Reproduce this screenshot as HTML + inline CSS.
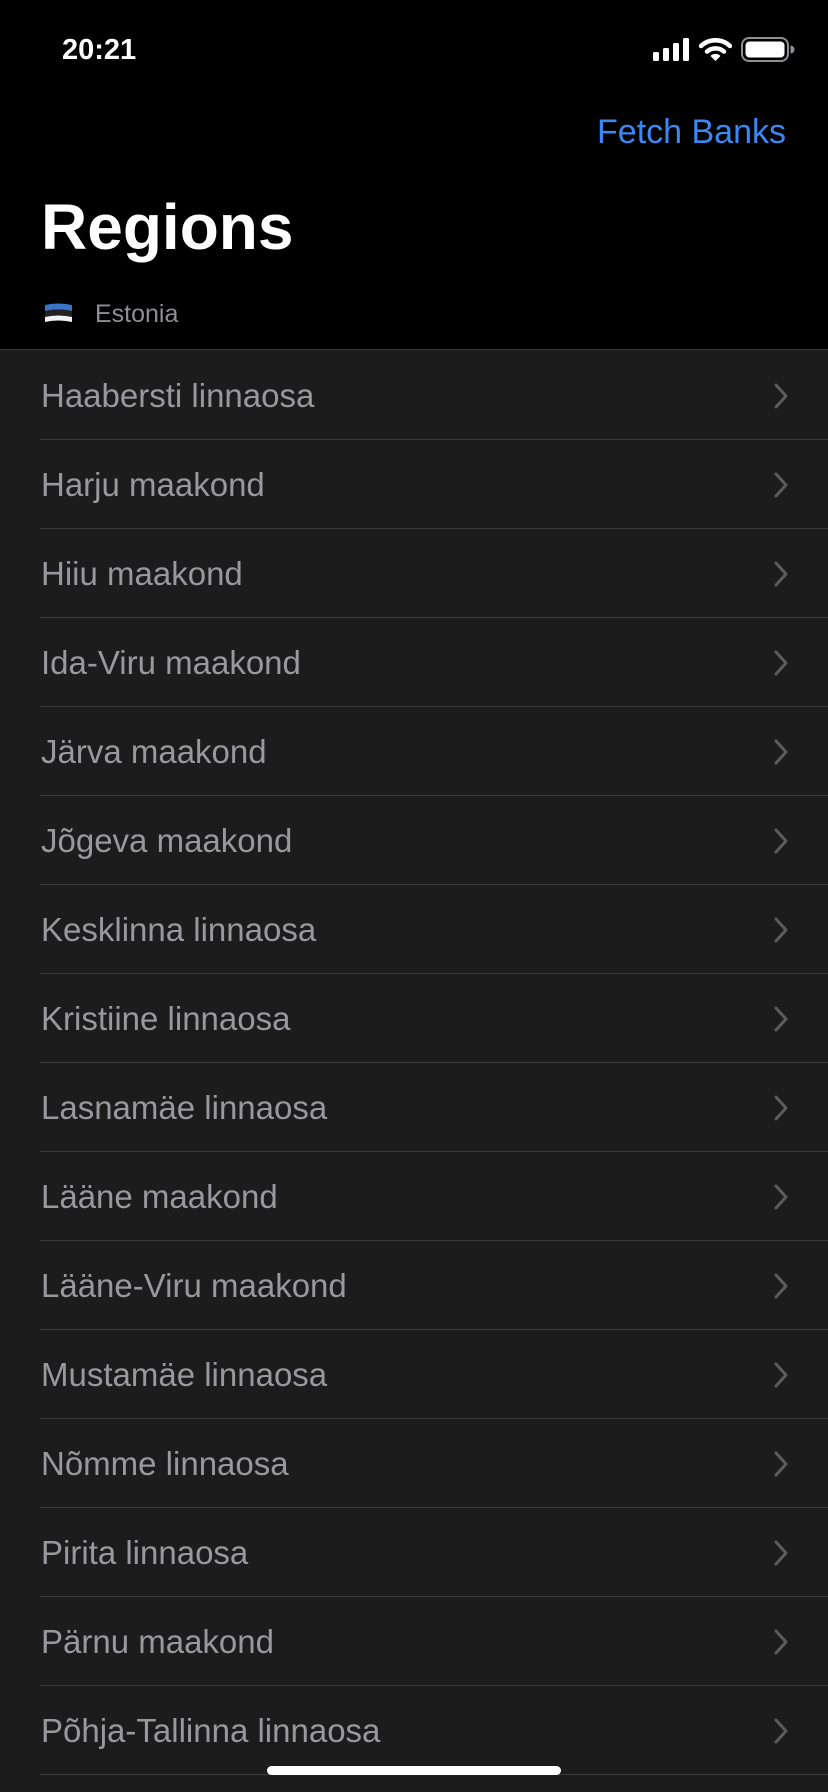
<!DOCTYPE html>
<html><head><meta charset="utf-8"><style>
*{margin:0;padding:0;box-sizing:border-box}
body{width:828px;height:1792px;background:#1c1c1c;font-family:"Liberation Sans",sans-serif;position:relative;overflow:hidden}
.hdr{position:absolute;left:0;top:0;width:828px;height:350px;background:#000;border-bottom:1px solid #3a3a3c}
.abs{position:absolute;white-space:nowrap}
.row{position:absolute;left:0;width:828px;height:89px}
.row .t{position:absolute;left:41px;top:25px;font-size:33px;line-height:40px;color:#98989d}
.row .sep{position:absolute;left:40px;right:0;bottom:0;height:1px;background:#3a3a3c}
.row svg{position:absolute;left:772px;top:31px}
</style></head><body>
<div class="hdr">
 <div class="abs" style="left:62px;top:33px;font-size:29px;line-height:34px;color:#fff;font-weight:bold;">20:21</div>
 <svg class="abs" style="left:653px;top:38px" width="38" height="23" viewBox="0 0 38 23">
  <rect x="0" y="14" width="6" height="9" rx="1.5" fill="#fff"/>
  <rect x="10" y="10" width="6" height="13" rx="1.5" fill="#fff"/>
  <rect x="20" y="5" width="6" height="18" rx="1.5" fill="#fff"/>
  <rect x="30" y="0" width="6" height="23" rx="1.5" fill="#fff"/>
 </svg>
 <svg class="abs" style="left:699px;top:38px" width="33" height="23" viewBox="0 0 33 23">
  <path d="M2 8 A21 21 0 0 1 31 8" stroke="#fff" stroke-width="4.5" fill="none" stroke-linecap="round"/>
  <path d="M8 13.5 A13 13 0 0 1 25 13.5" stroke="#fff" stroke-width="4.5" fill="none" stroke-linecap="round"/>
  <path d="M11.5 18 L16.5 23 L21.5 18 A7 7 0 0 0 11.5 18Z" fill="#fff"/>
 </svg>
 <svg class="abs" style="left:741px;top:37px" width="54" height="25" viewBox="0 0 54 25">
  <rect x="1" y="1" width="46" height="23" rx="7" fill="none" stroke="#8e8e93" stroke-width="2"/>
  <rect x="4.5" y="4.5" width="39" height="16" rx="4" fill="#fff"/>
  <path d="M49.5 8.5 a4 4 0 0 1 0 8z" fill="#8e8e93"/>
 </svg>
 <div class="abs" style="right:42px;top:112px;font-size:34px;line-height:40px;color:#3d87f5;">Fetch Banks</div>
 <div class="abs" style="left:41px;top:190px;font-size:64px;line-height:74px;color:#fff;font-weight:bold;">Regions</div>
 <svg class="abs" style="left:44px;top:303px" width="29" height="20" viewBox="0 0 29 20">
  <path d="M1 2 Q14 -1 28 2 V8 Q14 5 1 8Z" fill="#3a73c8"/>
  <path d="M1 8 Q14 5 28 8 V14 Q14 11 1 14Z" fill="#222"/>
  <path d="M1 14 Q14 11 28 14 V19 Q14 16 1 19Z" fill="#f2f2f2"/>
 </svg>
 <div class="abs" style="left:95px;top:299px;font-size:25px;line-height:30px;color:#8e8e93;">Estonia</div>
</div>
<div class="row" style="top:351px"><div class="t">Haabersti linnaosa</div><div class="sep"></div><svg width="18" height="28" viewBox="0 0 18 28"><path d="M4 3 L14 14 L4 25" stroke="#5c5c60" stroke-width="3" fill="none" stroke-linecap="round" stroke-linejoin="round"/></svg></div>
<div class="row" style="top:440px"><div class="t">Harju maakond</div><div class="sep"></div><svg width="18" height="28" viewBox="0 0 18 28"><path d="M4 3 L14 14 L4 25" stroke="#5c5c60" stroke-width="3" fill="none" stroke-linecap="round" stroke-linejoin="round"/></svg></div>
<div class="row" style="top:529px"><div class="t">Hiiu maakond</div><div class="sep"></div><svg width="18" height="28" viewBox="0 0 18 28"><path d="M4 3 L14 14 L4 25" stroke="#5c5c60" stroke-width="3" fill="none" stroke-linecap="round" stroke-linejoin="round"/></svg></div>
<div class="row" style="top:618px"><div class="t">Ida-Viru maakond</div><div class="sep"></div><svg width="18" height="28" viewBox="0 0 18 28"><path d="M4 3 L14 14 L4 25" stroke="#5c5c60" stroke-width="3" fill="none" stroke-linecap="round" stroke-linejoin="round"/></svg></div>
<div class="row" style="top:707px"><div class="t">Järva maakond</div><div class="sep"></div><svg width="18" height="28" viewBox="0 0 18 28"><path d="M4 3 L14 14 L4 25" stroke="#5c5c60" stroke-width="3" fill="none" stroke-linecap="round" stroke-linejoin="round"/></svg></div>
<div class="row" style="top:796px"><div class="t">Jõgeva maakond</div><div class="sep"></div><svg width="18" height="28" viewBox="0 0 18 28"><path d="M4 3 L14 14 L4 25" stroke="#5c5c60" stroke-width="3" fill="none" stroke-linecap="round" stroke-linejoin="round"/></svg></div>
<div class="row" style="top:885px"><div class="t">Kesklinna linnaosa</div><div class="sep"></div><svg width="18" height="28" viewBox="0 0 18 28"><path d="M4 3 L14 14 L4 25" stroke="#5c5c60" stroke-width="3" fill="none" stroke-linecap="round" stroke-linejoin="round"/></svg></div>
<div class="row" style="top:974px"><div class="t">Kristiine linnaosa</div><div class="sep"></div><svg width="18" height="28" viewBox="0 0 18 28"><path d="M4 3 L14 14 L4 25" stroke="#5c5c60" stroke-width="3" fill="none" stroke-linecap="round" stroke-linejoin="round"/></svg></div>
<div class="row" style="top:1063px"><div class="t">Lasnamäe linnaosa</div><div class="sep"></div><svg width="18" height="28" viewBox="0 0 18 28"><path d="M4 3 L14 14 L4 25" stroke="#5c5c60" stroke-width="3" fill="none" stroke-linecap="round" stroke-linejoin="round"/></svg></div>
<div class="row" style="top:1152px"><div class="t">Lääne maakond</div><div class="sep"></div><svg width="18" height="28" viewBox="0 0 18 28"><path d="M4 3 L14 14 L4 25" stroke="#5c5c60" stroke-width="3" fill="none" stroke-linecap="round" stroke-linejoin="round"/></svg></div>
<div class="row" style="top:1241px"><div class="t">Lääne-Viru maakond</div><div class="sep"></div><svg width="18" height="28" viewBox="0 0 18 28"><path d="M4 3 L14 14 L4 25" stroke="#5c5c60" stroke-width="3" fill="none" stroke-linecap="round" stroke-linejoin="round"/></svg></div>
<div class="row" style="top:1330px"><div class="t">Mustamäe linnaosa</div><div class="sep"></div><svg width="18" height="28" viewBox="0 0 18 28"><path d="M4 3 L14 14 L4 25" stroke="#5c5c60" stroke-width="3" fill="none" stroke-linecap="round" stroke-linejoin="round"/></svg></div>
<div class="row" style="top:1419px"><div class="t">Nõmme linnaosa</div><div class="sep"></div><svg width="18" height="28" viewBox="0 0 18 28"><path d="M4 3 L14 14 L4 25" stroke="#5c5c60" stroke-width="3" fill="none" stroke-linecap="round" stroke-linejoin="round"/></svg></div>
<div class="row" style="top:1508px"><div class="t">Pirita linnaosa</div><div class="sep"></div><svg width="18" height="28" viewBox="0 0 18 28"><path d="M4 3 L14 14 L4 25" stroke="#5c5c60" stroke-width="3" fill="none" stroke-linecap="round" stroke-linejoin="round"/></svg></div>
<div class="row" style="top:1597px"><div class="t">Pärnu maakond</div><div class="sep"></div><svg width="18" height="28" viewBox="0 0 18 28"><path d="M4 3 L14 14 L4 25" stroke="#5c5c60" stroke-width="3" fill="none" stroke-linecap="round" stroke-linejoin="round"/></svg></div>
<div class="row" style="top:1686px"><div class="t">Põhja-Tallinna linnaosa</div><div class="sep"></div><svg width="18" height="28" viewBox="0 0 18 28"><path d="M4 3 L14 14 L4 25" stroke="#5c5c60" stroke-width="3" fill="none" stroke-linecap="round" stroke-linejoin="round"/></svg></div>
<div class="abs" style="left:267px;top:1766px;width:294px;height:9px;border-radius:5px;background:#fff"></div>
</body></html>
